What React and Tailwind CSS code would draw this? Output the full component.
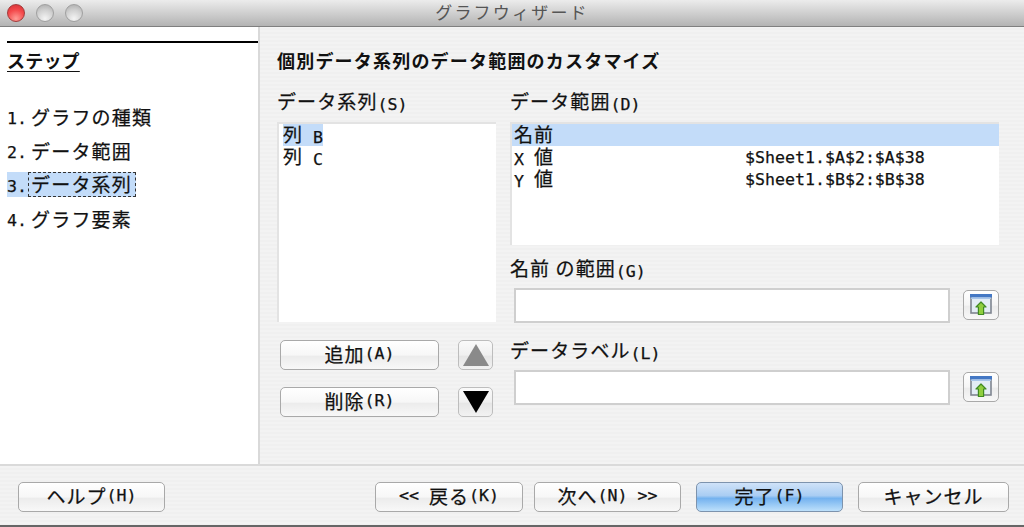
const CJK = "font-['Noto_Sans_CJK_JP','Noto_Sans_CJK_SC',sans-serif]";
const INK = "[-webkit-text-stroke:0.25px_#111]";

function L({ children }) {
  return <span className="relative top-[1px] whitespace-pre font-['DejaVu_Sans_Mono',monospace] text-[16.6px] font-normal tracking-normal">{children}</span>;
}

function Lights() {
  return (
    <div className="flex items-center gap-[11px] pl-[7px]">
      <span className="h-[18px] w-[18px] rounded-full border border-[#a33a3a] bg-[radial-gradient(circle_at_50%_85%,#ff9d96_0%,#f4494b_55%,#d22f33_100%)]" />
      <span className="h-[18px] w-[18px] rounded-full border border-[#a0a0a0] bg-[radial-gradient(circle_at_50%_85%,#f4f4f4_0%,#d0d0d0_55%,#a8a8a8_100%)]" />
      <span className="h-[18px] w-[18px] rounded-full border border-[#a0a0a0] bg-[radial-gradient(circle_at_50%_85%,#f4f4f4_0%,#d0d0d0_55%,#a8a8a8_100%)]" />
    </div>
  );
}

function Btn({ className = "", children, primary }) {
  return (
    <button
      className={
        "flex h-[30px] items-center justify-center rounded-[5px] border pb-[3px] text-[19px] leading-none tracking-[1px] text-[#111] " +
        INK + " " +
        (primary
          ? "border-[#7d93ad] bg-[linear-gradient(#cfe2f8_0%,#a9cdf3_45%,#74b2ef_55%,#bde0fb_100%)] "
          : "border-[#a9a9a9] bg-[linear-gradient(#ffffff_0%,#f7f7f7_50%,#ececec_55%,#f8f8f8_100%)] ") +
        className
      }
    >
      {children}
    </button>
  );
}

function RangeIcon() {
  return (
    <svg width="24" height="24" viewBox="0 0 24 24">
      <rect x="2" y="2" width="20" height="18" fill="#e3edf5" stroke="#7f8590" strokeWidth="1.6" />
      <rect x="1" y="1" width="22" height="3.5" fill="#4478c4" />
      <rect x="2" y="4.5" width="20" height="1.5" fill="#a9c6ea" />
      <path d="M12 9 L17 14 H14.6 V21.5 H9.4 V14 H7 Z" fill="#8fce3f" stroke="#3f8a22" strokeWidth="1.2" strokeLinejoin="round" />
    </svg>
  );
}

function RangeRow() {
  return (
    <div className="flex items-start pl-1">
      <div className="h-[35px] w-[436px] border-2 border-[#cfcfcf] bg-white" />
      <button className="ml-[13px] mt-[2px] flex h-[30px] w-[36px] items-center justify-center rounded-[5px] border border-[#a9a9a9] bg-[linear-gradient(#ffffff_0%,#f5f5f5_50%,#ececec_55%,#f8f8f8_100%)]">
        <RangeIcon />
      </button>
    </div>
  );
}

function Arrow({ up }) {
  return (
    <button className="flex h-[30px] w-[35px] items-center justify-center rounded-[5px] border border-[#bdbdbd] bg-[linear-gradient(#fafafa_0%,#f0f0f0_50%,#e6e6e6_55%,#f2f2f2_100%)]">
      <svg width="28" height="24" viewBox="0 0 28 24">
        {up ? <path d="M14 1 L27 23 H1 Z" fill="#8a8a8a" /> : <path d="M1 1 H27 L14 23 Z" fill="#000" />}
      </svg>
    </button>
  );
}

function Label({ children }) {
  return <div className={"h-6 text-[19px] leading-[20px] tracking-[1.1px] text-[#111] " + INK}>{children}</div>;
}

export default function App() {
  const steps = [
    ["1.", "グラフの種類"],
    ["2.", "データ範囲"],
    ["3.", "データ系列"],
    ["4.", "グラフ要素"],
  ];
  return (
    <div className={"flex h-[527px] w-[1024px] flex-col overflow-hidden bg-[repeating-linear-gradient(#f0f0f0_0px,#f0f0f0_2px,#f3f3f3_2px,#f3f3f3_4px)] " + CJK}>
      <div className="relative flex h-[27px] shrink-0 items-center border-b border-[#7f7f7f] bg-[linear-gradient(#ececec,#b3b3b3)]">
        <Lights />
        <div className="absolute inset-x-0 top-0 text-center text-[17px] leading-[24px] tracking-[2.2px] text-[#555]">グラフウィザード</div>
      </div>

      <div className="flex min-h-0 flex-1 border-b-2 border-[#dadada]">
        <aside className="w-[258px] shrink-0 bg-white pl-[7px] pt-[14px]">
          <div className="h-[1.5px] bg-black" />
          <div className="mt-[5px] h-6 text-[18px] font-bold leading-6 tracking-[0.2px] text-[#111] underline underline-offset-[3px]">ステップ</div>
          <ul className={"mt-[32px] flex flex-col gap-[9px] text-[19px] tracking-[1.2px] text-[#111] " + INK}>
            {steps.map(([n, t], i) => (
              <li key={n} className="flex h-[25px] items-center leading-[25px]">
                <span className={"flex h-[25px] items-center " + (i === 2 ? "bg-[#c3dcf9]" : "")}>
                  <span className="inline-block w-[21px]"><L>{n}</L></span>
                  <span className={i === 2 ? "block h-[25px] w-[108px] whitespace-nowrap border border-dashed border-[#333] bg-[#c3dcf9] pl-[2px] leading-[21px]" : "pl-[3px]"}>{t}</span>
                </span>
              </li>
            ))}
          </ul>
        </aside>

        <main className="flex-1 border-l-2 border-[#d9d9d9] pl-[17px] pt-5">
          <h1 className="h-7 text-[18px] font-bold leading-[26px] tracking-[1.2px] text-[#111]">個別データ系列のデータ範囲のカスタマイズ</h1>
          <div className="mt-4 flex gap-[14px]">
            <div className="w-[219px]">
              <Label>データ系列<L>(S)</L></Label>
              <div className={"mt-[7px] h-[200px] border-2 border-b-0 border-r-0 border-[#e3e3e3] bg-white pl-1 text-[19px] leading-[20px] tracking-[1px] text-[#111] " + INK}>
                <div className="h-[22px] w-fit bg-[#c3dcf9]">列<L> B</L></div>
                <div className="h-[22px]">列<L> C</L></div>
              </div>
              <div className="mt-[18px] flex flex-col gap-[17px] pl-[3px]">
                <div className="flex gap-[19px]">
                  <Btn className="w-[159px]">追加<L>(A)</L></Btn>
                  <Arrow up />
                </div>
                <div className="flex gap-[19px]">
                  <Btn className="w-[159px]">削除<L>(R)</L></Btn>
                  <Arrow />
                </div>
              </div>
            </div>

            <div className="w-[489px]">
              <Label>データ範囲<L>(D)</L></Label>
              <div className={"mt-[7px] h-[123px] border-2 border-b-0 border-r-0 border-[#e3e3e3] bg-white text-[19px] leading-[20px] tracking-[1px] text-[#111] " + INK}>
                <div className="h-[22px] bg-[#c3dcf9] pl-[2px]">名前</div>
                <div className="flex h-[22px] pl-[2px]">
                  <span className="w-[231px]"><L>X </L>値</span>
                  <span className="flex h-[22px] items-center"><L>$Sheet1.$A$2:$A$38</L></span>
                </div>
                <div className="flex h-[22px] pl-[2px]">
                  <span className="w-[231px]"><L>Y </L>値</span>
                  <span className="flex h-[22px] items-center"><L>$Sheet1.$B$2:$B$38</L></span>
                </div>
              </div>
              <div className="mt-[13px]"><Label>名前 の範囲<L>(G)</L></Label></div>
              <div className="mt-[6px]"><RangeRow /></div>
              <div className="mt-[17px]"><Label>データラベル<L>(L)</L></Label></div>
              <div className="mt-[6px]"><RangeRow /></div>
            </div>
          </div>
        </main>
      </div>

      <footer className="flex h-[61px] shrink-0 items-start border-b-2 border-[#666] pl-[18px] pt-4">
        <Btn className="w-[147px]">ヘルプ<L>(H)</L></Btn>
        <Btn className="ml-[210px] w-[148px]"><L>{"<< "}</L>戻る<L>(K)</L></Btn>
        <Btn className="ml-[11px] w-[147px]">次へ<L>{"(N) >>"}</L></Btn>
        <Btn primary className="ml-[15px] w-[147px]">完了<L>(F)</L></Btn>
        <Btn className="ml-[15px] w-[151px]">キャンセル</Btn>
      </footer>
    </div>
  );
}
